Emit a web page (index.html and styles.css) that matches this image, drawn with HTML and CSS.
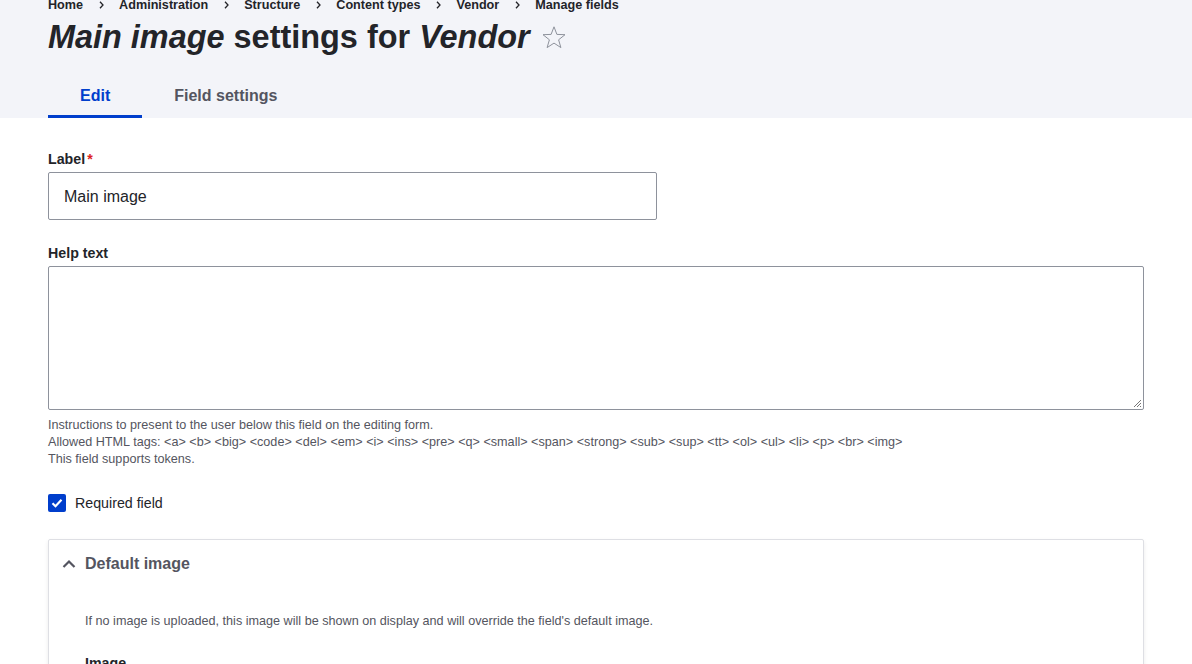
FILE: index.html
```html
<!DOCTYPE html>
<html lang="en">
<head>
<meta charset="utf-8">
<link rel="stylesheet" href="styles.css">
</head>
<body>
<header class="page-header">
  <nav class="breadcrumb">
    <a>Home</a><span class="sep"></span>
    <a>Administration</a><span class="sep"></span>
    <a>Structure</a><span class="sep"></span>
    <a>Content types</a><span class="sep"></span>
    <a>Vendor</a><span class="sep"></span>
    <a>Manage fields</a>
  </nav>
  <div class="title-row">
    <h1 class="title"><em>Main image</em> settings for <em>Vendor</em></h1>
    <svg class="star" width="24" height="24" viewBox="0 0 24 24"><path d="M12 1.8l2.9 7.6 8.1.3-6.4 5.1 2.3 7.8L12 18.1l-6.9 4.5 2.3-7.8L1 9.7l8.1-.3z" fill="none" stroke="#8e929c" stroke-width="1" stroke-linejoin="miter"/></svg>
  </div>
  <ul class="tabs">
    <li class="tab active">Edit</li>
    <li class="tab">Field settings</li>
  </ul>
</header>
<main class="content">
  <div class="form-item">
    <label class="form-label">Label<span class="req">*</span></label>
    <div class="input">Main image</div>
  </div>
  <div class="form-item help">
    <label class="form-label">Help text</label>
    <div class="textarea"><svg class="grip" width="9" height="9" viewBox="0 0 9 9"><path d="M8 1L1 8M8 4L4 8M8 7L7 8" stroke="#777" stroke-width="1" fill="none"/></svg></div>
    <div class="description">
      Instructions to present to the user below this field on the editing form.<br>
      Allowed HTML tags: &lt;a&gt; &lt;b&gt; &lt;big&gt; &lt;code&gt; &lt;del&gt; &lt;em&gt; &lt;i&gt; &lt;ins&gt; &lt;pre&gt; &lt;q&gt; &lt;small&gt; &lt;span&gt; &lt;strong&gt; &lt;sub&gt; &lt;sup&gt; &lt;tt&gt; &lt;ol&gt; &lt;ul&gt; &lt;li&gt; &lt;p&gt; &lt;br&gt; &lt;img&gt;<br>
      This field supports tokens.
    </div>
  </div>
  <div class="checkbox-row">
    <span class="checkbox"><svg width="14" height="14" viewBox="0 0 14 14"><path d="M2.5 7.2l3 3 6-6.4" fill="none" stroke="#fff" stroke-width="2.2"/></svg></span>
    <span class="checkbox-label">Required field</span>
  </div>
  <section class="details">
    <div class="summary">
      <svg class="chev" width="14" height="10" viewBox="0 0 14 10"><path d="M1.5 8L7 2.5 12.5 8" fill="none" stroke="#545560" stroke-width="2.2"/></svg>
      <span>Default image</span>
    </div>
    <div class="details-body">
      <p class="details-desc">If no image is uploaded, this image will be shown on display and will override the field's default image.</p>
      <div class="form-label">Image</div>
    </div>
  </section>
</main>
</body>
</html>
```
FILE: styles.css
```css
* { box-sizing: border-box; }
html, body { margin: 0; padding: 0; }
body {
  font-family: "Liberation Sans", Arial, sans-serif;
  color: #232429;
  background: #fff;
  width: 1192px;
  height: 664px;
  overflow: hidden;
}
.page-header {
  background: #f3f4f9;
  padding: 0 48px;
  height: 118px;
  display: flex;
  flex-direction: column;
}
.breadcrumb {
  display: flex;
  align-items: center;
  font-size: 12.64px;
  font-weight: bold;
  line-height: 18px;
  margin-top: -4px;
  height: 18px;
}
.breadcrumb a { color: #232429; }
.breadcrumb .sep {
  width: 5px;
  height: 8px;
  margin: 0 15px 0 16px;
  background: no-repeat center/5px 8px url("data:image/svg+xml,%3Csvg xmlns='http://www.w3.org/2000/svg' width='5' height='8' viewBox='0 0 5 8'%3E%3Cpath d='M1 0.7L4 4 1 7.3' fill='none' stroke='%23232429' stroke-width='1.3'/%3E%3C/svg%3E");
}
.title-row {
  display: flex;
  align-items: center;
  margin-top: 4px;
  height: 38px;
}
.title {
  margin: 0;
  font-size: 32.43px;
  line-height: 38px;
  font-weight: bold;
  color: #232429;
}
.title em { font-style: italic; }
.star { margin-left: 12px; margin-top: 0; }
.tabs {
  list-style: none;
  margin: auto 0 0;
  padding: 0;
  display: flex;
}
.tab {
  padding: 0 32px;
  height: 44px;
  line-height: 44px;
  font-size: 16px;
  font-weight: bold;
  color: #545560;
  border-bottom: 3px solid transparent;
}
.tab.active {
  color: #003ecc;
  border-bottom-color: #003ecc;
}
.content {
  padding: 32px 48px 0;
}
.form-item { margin-bottom: 24px; }
.form-label {
  display: block;
  font-size: 14.22px;
  font-weight: bold;
  line-height: 18px;
  margin-bottom: 4px;
  color: #232429;
}
.req { color: #dc2323; margin-left: 2px; }
.input {
  width: 609px;
  height: 48px;
  border: 1px solid #8e929c;
  border-radius: 2px;
  padding: 0 15px;
  font-size: 16px;
  line-height: 47px;
  color: #232429;
}
.textarea {
  position: relative;
  width: 1096px;
  height: 144px;
  border: 1px solid #8e929c;
  border-radius: 2px;
}
.grip { position: absolute; right: 1px; bottom: 1px; }
.description {
  margin-top: 7px;
  font-size: 12.64px;
  line-height: 17px;
  color: #545560;
}
.form-item.help { margin-bottom: 26px; }
.checkbox-row {
  display: flex;
  align-items: center;
  height: 18px;
  margin-bottom: 27px;
}
.checkbox {
  width: 18px;
  height: 18px;
  border-radius: 2px;
  background: #003ecc;
  display: flex;
  align-items: center;
  justify-content: center;
}
.checkbox-label {
  margin-left: 9px;
  font-size: 14.22px;
  color: #232429;
}
.details {
  width: 1096px;
  border: 1px solid #dedfe4;
  border-radius: 2px;
  box-shadow: 0 2px 4px rgba(0,0,0,0.08);
  height: 200px;
}
.summary {
  display: flex;
  align-items: center;
  height: 48px;
  padding-left: 13px;
  font-size: 16px;
  font-weight: bold;
  color: #545560;
}
.chev { margin-right: 9px; }
.details-body {
  padding: 24px 36px;
}
.details-desc {
  margin: 0 0 24px;
  font-size: 12.64px;
  line-height: 18px;
  color: #545560;
}
```
